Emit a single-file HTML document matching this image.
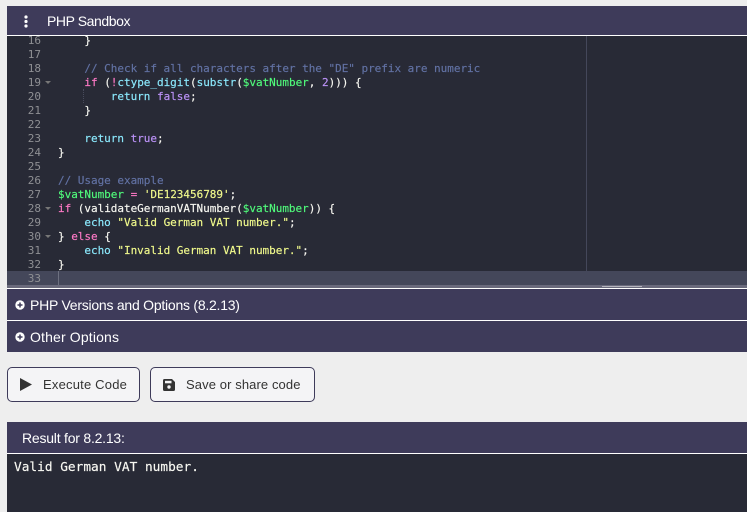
<!DOCTYPE html>
<html><head><meta charset="utf-8"><style>
html,body{margin:0;padding:0;width:747px;height:512px;overflow:hidden;background:#eee;font-family:"Liberation Sans",sans-serif}
.a{position:absolute}
.bar{position:absolute;left:7px;width:740px;background:#3e3b5a;color:#fff;font-size:14px;white-space:nowrap}
.w{position:absolute;left:7px;width:740px;height:1px;background:#fff}
#ed{position:absolute;left:7px;top:36px;width:740px;height:252px;background:#282a36;overflow:hidden}
.l{position:absolute;left:51px;font:11px/14px "DejaVu Sans Mono",monospace;letter-spacing:-.025px;color:#f8f8f2;white-space:pre;-webkit-text-stroke:.15px currentColor;margin-top:1px}
.n{position:absolute;left:0;width:34px;text-align:right;font:11px/14px "DejaVu Sans Mono",monospace;color:#8f9094;margin-top:1px}
.k{color:#ff79c6}.f{color:#8be9fd}.v{color:#50fa7b}.s{color:#f1fa8c}.c{color:#6272a4}.b{color:#bd93f9}
.ar{position:absolute;left:38px;width:0;height:0;border-left:3px solid transparent;border-right:3px solid transparent;border-top:3px solid #777}
.btn{position:absolute;top:367px;height:33px;background:#f4f4f6;border:1px solid #3e3b5a;border-radius:5px;font-size:13px;color:#333;line-height:33px;white-space:nowrap}
</style></head><body>
<div class="bar" style="top:6px;height:29px"><span class="a" style="left:40px;top:6px;font-size:14px;line-height:18px;letter-spacing:-.42px">PHP Sandbox</span>
<svg class="a" style="left:16px;top:9px" width="6" height="14"><circle cx="3" cy="2" r="1.600" fill="#fff"/><circle cx="3" cy="6.500" r="1.600" fill="#fff"/><circle cx="3" cy="11" r="1.600" fill="#fff"/></svg></div>
<div class="w" style="top:35px"></div>
<div id="ed">
<div class="a" style="left:0;top:235px;width:740px;height:14px;background:#44475a"></div>
<div class="a" style="left:0;top:249px;width:740px;height:3px;background:#6a6a7c"></div>
<div class="a" style="left:595px;top:250px;width:40px;height:1px;background:#b4b4bc"></div>
<div class="a" style="left:579px;top:0;width:1px;height:235px;background:#44475a"></div>
<div class="a" style="left:51px;top:235px;width:1px;height:14px;background:#6d7080"></div>
<div class="a" style="left:76px;top:53px;width:0;height:14px;border-left:1px dotted #484b5c"></div>
<div class="n" style="top:-3px">16</div><div class="n" style="top:11px">17</div><div class="n" style="top:25px">18</div><div class="n" style="top:39px">19</div><div class="n" style="top:53px">20</div><div class="n" style="top:67px">21</div><div class="n" style="top:81px">22</div><div class="n" style="top:95px">23</div><div class="n" style="top:109px">24</div><div class="n" style="top:123px">25</div><div class="n" style="top:137px">26</div><div class="n" style="top:151px">27</div><div class="n" style="top:165px">28</div><div class="n" style="top:179px">29</div><div class="n" style="top:193px">30</div><div class="n" style="top:207px">31</div><div class="n" style="top:221px">32</div><div class="n" style="top:235px">33</div>
<div class="ar" style="top:45px"></div><div class="ar" style="top:171px"></div><div class="ar" style="top:199px"></div>
<div class="l" style="top:-3px">    }</div>
<div class="l c" style="top:25px">    // Check if all characters after the "DE" prefix are numeric</div>
<div class="l" style="top:39px">    <span class="k">if</span> (<span class="k">!</span><span class="f">ctype_digit</span>(<span class="f">substr</span>(<span class="v">$vatNumber</span>, <span class="b">2</span>))) {</div>
<div class="l" style="top:53px">        <span class="f">return</span> <span class="b">false</span>;</div>
<div class="l" style="top:67px">    }</div>
<div class="l" style="top:95px">    <span class="f">return</span> <span class="b">true</span>;</div>
<div class="l" style="top:109px">}</div>
<div class="l c" style="top:137px">// Usage example</div>
<div class="l" style="top:151px"><span class="v">$vatNumber</span> <span class="k">=</span> <span class="s">'DE123456789'</span>;</div>
<div class="l" style="top:165px"><span class="k">if</span> (validateGermanVATNumber(<span class="v">$vatNumber</span>)) {</div>
<div class="l" style="top:179px">    <span class="f">echo</span> <span class="s">"Valid German VAT number."</span>;</div>
<div class="l" style="top:193px">} <span class="k">else</span> {</div>
<div class="l" style="top:207px">    <span class="f">echo</span> <span class="s">"Invalid German VAT number."</span>;</div>
<div class="l" style="top:221px">}</div>
</div>
<div class="w" style="top:288px"></div>
<div class="bar" style="top:289px;height:31px"><span class="a" style="left:23px;top:7px;line-height:18px;letter-spacing:-.24px">PHP Versions and Options (8.2.13)</span>
<svg class="a" style="left:8px;top:11px" width="10" height="10"><circle cx="5" cy="5" r="4.700" fill="#fff"/><path d="M2.500 5h5M5 2.500v5" stroke="#3e3b5a" stroke-width="1.500"/></svg></div>
<div class="w" style="top:320px"></div>
<div class="bar" style="top:321px;height:31px"><span class="a" style="left:23px;top:7px;line-height:18px;letter-spacing:.15px">Other Options</span>
<svg class="a" style="left:8px;top:11px" width="10" height="10"><circle cx="5" cy="5" r="4.700" fill="#fff"/><path d="M2.500 5h5M5 2.500v5" stroke="#3e3b5a" stroke-width="1.500"/></svg></div>
<div class="btn" style="left:7px;width:131px"><svg class="a" style="left:12px;top:10px" width="12" height="13"><path d="M0 0L12 6.500L0 13Z" fill="#333"/></svg><span class="a" style="left:35px;top:0;letter-spacing:.2px">Execute Code</span></div>
<div class="btn" style="left:150px;width:163px"><svg class="a" style="left:12px;top:11px" width="12" height="12"><path d="M1.500 0H9L12 3V10.500A1.500 1.500 0 0 1 10.500 12H1.500A1.500 1.500 0 0 1 0 10.500V1.500A1.500 1.500 0 0 1 1.500 0Z" fill="#333"/><rect x="2" y="1.800" width="6.500" height="2.500" fill="#f4f4f6"/><circle cx="6" cy="8" r="1.700" fill="#f4f4f6"/></svg><span class="a" style="left:35px;top:0;letter-spacing:.1px">Save or share code</span></div>
<div class="bar" style="top:422px;height:31px"><span class="a" style="left:15px;top:7px;line-height:18px;letter-spacing:-.22px">Result for 8.2.13:</span></div>
<div class="w" style="top:453px"></div>
<div class="a" style="left:7px;top:454px;width:740px;height:58px;background:#282a36"></div>
<div class="a" style="left:14px;top:460px;font:12.800px/16px 'DejaVu Sans Mono',monospace;color:#f8f8f2;white-space:pre;-webkit-text-stroke:.15px #f8f8f2">Valid German VAT number.</div>
</body></html>
